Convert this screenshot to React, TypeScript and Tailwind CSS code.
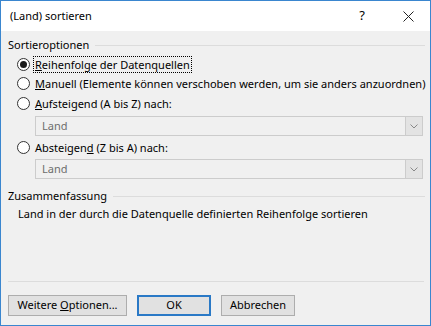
import React from "react";

const font = { fontFamily: '"Noto Sans", "Open Sans", sans-serif' };

const Radio = ({ checked, children, focus }: { checked?: boolean; children: React.ReactNode; focus?: boolean }) => (
  <div className="flex items-center h-[18px] pl-[9px]">
    <div className="w-[13px] h-[13px] rounded-full border border-[#333333] bg-white flex items-center justify-center shrink-0">
      {checked && <div className="w-[7px] h-[7px] rounded-full bg-[#1a1a1a]" />}
    </div>
    <div
      className={
        "ml-[4px] px-[1px] leading-[15px] whitespace-nowrap " +
        (focus ? "outline outline-1 outline-dotted outline-black" : "")
      }
    >
      {children}
    </div>
  </div>
);

const Select = () => (
  <div className="ml-[27px] mr-[2px] h-[20px] border border-[#cccccc] bg-[#f0f0f0] flex items-center">
    <span className="flex-1 pl-[6px] text-[#6d6d6d]">Land</span>
    <div className="w-[17px] h-full bg-[#e3e3e3] border-l border-[#cccccc] flex items-center justify-center">
      <svg width="8" height="5" viewBox="0 0 8 5">
        <path d="M0.5 0.5 L4 4 L7.5 0.5" fill="none" stroke="#888" strokeWidth="1" />
      </svg>
    </div>
  </div>
);

const GroupHeader = ({ title }: { title: string }) => (
  <div className="flex items-center h-[16px]">
    <span className="whitespace-nowrap">{title}</span>
    <div className="flex-1 h-px bg-[#dcdcdc] ml-[6px]" />
  </div>
);

const Btn = ({ children, primary, w }: { children: React.ReactNode; primary?: boolean; w: string }) => (
  <div
    className={
      "h-[21px] bg-[#e1e1e1] flex items-center justify-center " +
      w +
      (primary ? " border-2 border-[#2a79c6]" : " border border-[#adadad]")
    }
  >
    {children}
  </div>
);

export default function App() {
  return (
    <div
      className="w-[431px] h-[326px] border border-[#3a86cf] bg-[#f0f0f0] flex flex-col text-[11px] text-black"
      style={font}
    >
      <div className="h-[30px] bg-white flex items-center pl-[9px] pr-[16px]">
        <span className="flex-1 text-[11px]">(Land) sortieren</span>
        <span className="text-[13px] mr-[38px]">?</span>
        <svg width="11" height="11" viewBox="0 0 11 11">
          <path d="M0.5 0.5 L10.5 10.5 M10.5 0.5 L0.5 10.5" stroke="#222" strokeWidth="1" />
        </svg>
      </div>
      <div className="flex-1 flex flex-col pl-[7px] pr-[5px] pt-[6px]">
        <GroupHeader title="Sortieroptionen" />
        <div className="mt-[2px] flex flex-col">
          <Radio checked focus>
            <u>R</u>eihenfolge der Datenquellen
          </Radio>
          <div className="h-[1px]" />
          <Radio>
            <u>M</u>anuell (Elemente können verschoben werden, um sie anders anzuordnen)
          </Radio>
          <div className="h-[2px]" />
          <Radio>
            <u>A</u>ufsteigend (A bis Z) nach:
          </Radio>
          <div className="mt-[4px]">
            <Select />
          </div>
          <div className="mt-[2px]">
            <Radio>
              Absteigen<u>d</u> (Z bis A) nach:
            </Radio>
          </div>
          <div className="mt-[3px]">
            <Select />
          </div>
        </div>
        <div className="mt-[9px]">
          <GroupHeader title="Zusammenfassung" />
        </div>
        <div className="pl-[10px] mt-[2px] h-[16px]">
          Land in der durch die Datenquelle definierten Reihenfolge sortieren
        </div>
        <div className="flex-1" />
        <div className="h-px bg-[#dcdcdc] mr-[1px]" />
        <div className="flex items-center gap-[10px] mt-[13px] mb-[9px]">
          <Btn w="w-[119px]">
            Weitere&nbsp;<u>O</u>ptionen...
          </Btn>
          <Btn w="w-[74px]" primary>
            OK
          </Btn>
          <Btn w="w-[74px]">Abbrechen</Btn>
        </div>
      </div>
    </div>
  );
}
